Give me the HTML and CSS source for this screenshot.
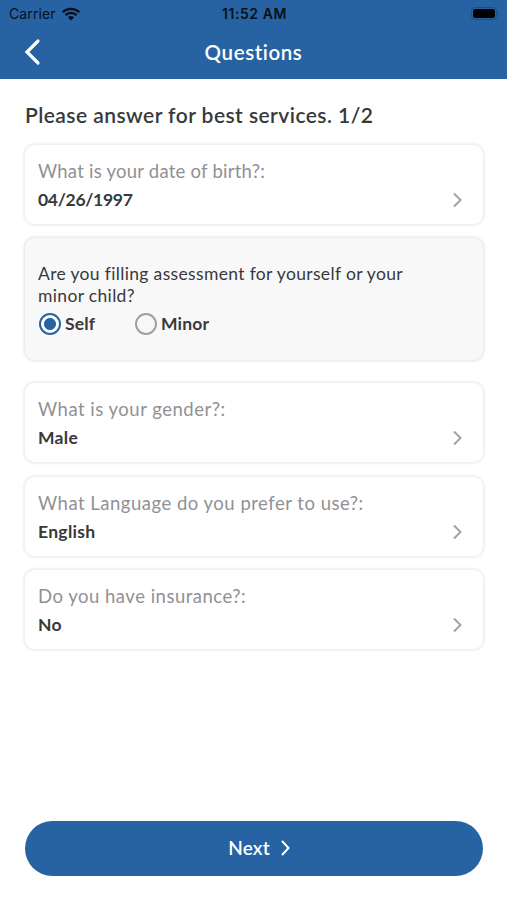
FILE: index.html
```html
<!DOCTYPE html>
<html lang="en">
<head>
<meta charset="utf-8">
<title>Questions</title>
<link rel="stylesheet" href="styles.css">
</head>
<body>
<header class="top">
  <div class="status">
    <div class="carrier"><span>Carrier</span>
      <svg width="20" height="14" viewBox="0 0 20 14"><path d="M10 13.5 6.9 10.4a4.4 4.4 0 0 1 6.2 0Z" fill="#07101a"/><path d="M1.7 5.2a11.8 11.8 0 0 1 16.6 0M4.5 8.1a7.8 7.8 0 0 1 11 0" fill="none" stroke="#07101a" stroke-width="2.3"/></svg>
    </div>
    <span class="time">11:52 AM</span>
    <svg class="battery" width="29" height="13" viewBox="0 0 29 13"><rect x=".5" y=".5" width="25" height="12" rx="3.5" fill="none" stroke="#1d4f83"/><rect x="2" y="2" width="22" height="9" rx="2.2" fill="#000"/><path d="M27 4.5q1.500 2 0 4Z" fill="#184574"/></svg>
  </div>
  <div class="nav">
    <svg width="18" height="28" viewBox="0 0 18 28"><path d="M15 3 4 14l11 11" fill="none" stroke="#fff" stroke-width="3.2" stroke-linecap="round"/></svg>
    <h1>Questions</h1>
  </div>
</header>
<main>
  <h2>Please answer for best services. 1/2</h2>
  <section class="card"><div><p class="label birth">What is your date of birth?:</p><p class="value date">04/26/1997</p></div><svg class="chev" width="12" height="18" viewBox="0 0 12 18"><path d="m2 2.500 6.500 6.500L2 15.500"/></svg></section>
  <section class="choice"><p>Are you filling assessment for yourself or your<br>minor child?</p>
    <div class="options"><span class="option self"><i class="radio on"></i>Self</span><span class="option"><i class="radio"></i>Minor</span></div></section>
  <section class="card"><div><p class="label">What is your gender?:</p><p class="value">Male</p></div><svg class="chev" width="12" height="18" viewBox="0 0 12 18"><path d="m2 2.500 6.500 6.500L2 15.500"/></svg></section>
  <section class="card"><div><p class="label">What Language do you prefer to use?:</p><p class="value">English</p></div><svg class="chev" width="12" height="18" viewBox="0 0 12 18"><path d="m2 2.500 6.500 6.500L2 15.500"/></svg></section>
  <section class="card"><div><p class="label">Do you have insurance?:</p><p class="value">No</p></div><svg class="chev" width="12" height="18" viewBox="0 0 12 18"><path d="m2 2.500 6.500 6.500L2 15.500"/></svg></section>
</main>
<footer><button>Next<svg width="11" height="18" viewBox="0 0 11 18"><path d="m2 2 6.500 7L2 16" fill="none" stroke="#fff" stroke-width="2"/></svg></button></footer>
</body>
</html>
```

FILE: styles.css
```css
* { box-sizing: border-box; }
body { margin: 0; height: 900px; display: flex; flex-direction: column; background: #fff; color: #38393b; font-family: Lato, sans-serif; font-variant-ligatures: none; }
h1, h2, p { margin: 0; font-weight: 600; white-space: nowrap; }
svg { display: block; flex: none; }
.top { height: 79px; background: #2763a3; flex: none; }
.status { height: 27px; padding: 0 7px 0 9px; display: grid; grid-template-columns: 1fr auto 1fr; align-items: center; font: 14px Inter, sans-serif; letter-spacing: .1px; color: #07101a; }
.carrier { display: flex; gap: 5px; align-items: center; }
.time { font-weight: 600; font-size: 14px; letter-spacing: .55px; }
.battery { justify-self: end; }
.nav { height: 50px; display: grid; grid-template-columns: 1fr auto 1fr; align-items: center; padding: 0 23px; }
h1 { color: #fff; font-size: 20.5px; letter-spacing: .6px; }
main { padding: 22px 23px 0 24px; flex: 1; }
h2 { padding-left: 1px; font-size: 21px; line-height: 28px; letter-spacing: .45px; margin-bottom: 15px; }
.card { height: 81px; margin-bottom: 12.4px; padding: 12px 19px 0 13px; display: flex; justify-content: space-between; border: 1px solid #f0f0f0; border-radius: 11px; box-shadow: 0 0 3px #0002; }
.label { color: #909194; font-size: 18.5px; line-height: 28px; font-weight: 400; letter-spacing: .5px; }
.birth { letter-spacing: .24px; }
.value { font-size: 17.5px; line-height: 28px; margin-top: 1px; letter-spacing: .3px; font-weight: 700; }
.date { letter-spacing: -.3px; }
.chev { margin-top: 34px; fill: none; stroke: #a2a2a2; stroke-width: 2; }
.choice { height: 124px; margin-bottom: 21px; padding: 25px 13px 0; border: 1px solid #eee; border-radius: 11px; background: #f8f8f8; box-shadow: 0 0 3px #0002; }
.choice p { font-size: 17.5px; line-height: 22px; font-weight: 400; letter-spacing: .34px; }
.options { display: flex; margin: 6px 0 0 1px; }
.option { display: flex; align-items: center; gap: 4px; font-size: 17.5px; line-height: 22px; font-weight: 700; letter-spacing: .2px; }
.self { width: 96px; }
.radio { width: 22px; height: 22px; border: 2px solid #a0a0a0; border-radius: 50%; }
.on { border-color: #2763a3; background: radial-gradient(circle, #2763a3 0 5.500px, #fff 6.500px); }
footer { padding: 0 24px 24px 25px; }
button { width: 100%; height: 55px; padding: 0 0 2px 11px; border: 0; border-radius: 28px; background: #2763a3; color: #fff; font: 600 19px Lato, sans-serif; letter-spacing: .2px; display: flex; align-items: center; justify-content: center; gap: 10px; }
```
